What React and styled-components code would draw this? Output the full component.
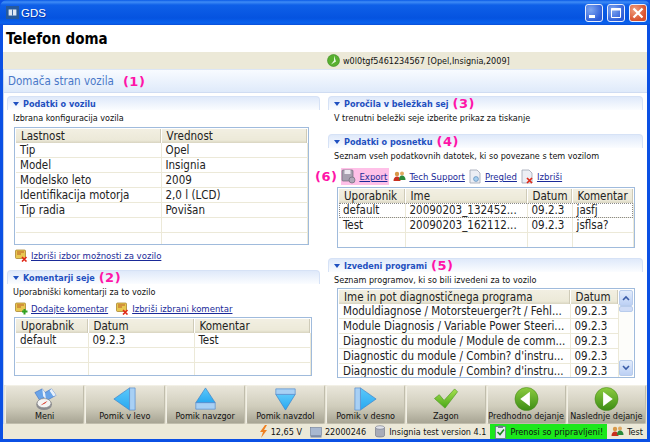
import React from "react";
import styled, { createGlobalStyle } from "styled-components";

const GlobalStyle = createGlobalStyle`
  html, body { margin: 0; padding: 0; background: #0a4de0; overflow: hidden; }
  body { font-family: "DejaVu Sans Condensed", "DejaVu Sans", sans-serif; }
`;

const Win = styled.div`
  width: 650px;
  height: 442px;
  display: flex;
  flex-direction: column;
  overflow: hidden;
  background: #0b50e4;
`;

const TitleBar = styled.div`
  height: 25px;
  flex: none;
  display: flex;
  align-items: center;
  padding: 0 3px 0 6px;
  gap: 2px;
  border-radius: 7px 7px 0 0;
  background: linear-gradient(#0a5ae6 0, #3f8cf6 2px, #0f60e8 5px, #0553e0 18px, #0a62ee 23px, #0a4ed8 25px);
  color: #fff;
  font: 11.5px "Liberation Sans", Arial, sans-serif;
`;

const TitleText = styled.span`
  flex: 1;
  text-shadow: 1px 1px 0 #0a3aa8;
`;

const WinBtn = styled.div`
  width: 18px;
  height: 18px;
  box-sizing: border-box;
  border: 1px solid #e8eefc;
  border-radius: 3px;
  margin-left: 2px;
  display: flex;
  align-items: center;
  justify-content: center;
  background: ${p => (p.$close ? "radial-gradient(circle at 30% 30%, #f0a080, #d8502c 70%)" : "radial-gradient(circle at 30% 30%, #7ea6f0, #2c5cd8 75%)")};
`;

const Client = styled.div`
  flex: 1;
  margin: 0 3px 3px;
  display: flex;
  flex-direction: column;
  background: #fff;
  min-height: 0;
`;

const Heading = styled.h1`
  margin: 0;
  height: 27px;
  flex: none;
  padding-left: 3px;
  font-size: 15px;
  font-weight: bold;
  line-height: 29px;
  color: #000;
`;

const VinBar = styled.div`
  height: 17px;
  flex: none;
  background: #ece9d8;
  display: flex;
  align-items: center;
  gap: 3px;
  font-size: 9px;
  color: #111;
  padding-left: 324px;
`;

const Page = styled.div`
  flex: 1;
  min-height: 0;
  display: flex;
  flex-direction: column;
  border-left: 1px solid #c4d4ee;
`;

const PageTitle = styled.div`
  height: 24px;
  flex: none;
  box-sizing: border-box;
  padding-left: 4px;
  border-top: 1px solid #dce6f6;
  border-bottom: 1px solid #cfdcf2;
  background: linear-gradient(#f8fbff, #dfeafa);
  color: #4a78c8;
  font-size: 11.5px;
  line-height: 23px;
  display: flex;
  gap: 9px;
`;

const Tag = styled.span`
  color: #ff14a8;
  font-family: "DejaVu Sans", sans-serif;
  font-weight: bold;
  font-size: ${p => p.$size || 13}px;
  letter-spacing: 0.5px;
`;

const Columns = styled.div`
  flex: 1;
  min-height: 0;
  display: grid;
  grid-template-columns: 313px 315px;
  column-gap: 8px;
  padding: 3px 0 0 3px;
`;

const Column = styled.div`
  display: flex;
  flex-direction: column;
`;

const SectionHead = styled.div`
  height: 14px;
  box-sizing: border-box;
  flex: none;
  display: flex;
  align-items: center;
  gap: 4px;
  padding-left: 5px;
  border: 1px solid #d6e2f6;
  border-bottom: none;
  border-radius: 4px 4px 0 0;
  background: linear-gradient(#dfe9fa, #fbfdff);
  color: #1f50c0;
  font-size: 9px;
  font-weight: bold;
  margin-top: ${p => p.$top || 0}px;
`;

const Caret = styled.i`
  width: 0;
  height: 0;
  border: 3.5px solid transparent;
  border-top: 4px solid #1f50c0;
  border-bottom: none;
`;

const Sub = styled.div`
  font-size: 9px;
  line-height: 13px;
  margin: 2px 0 0 6px;
  color: #111;
`;

const Actions = styled.div`
  display: flex;
  align-items: center;
  gap: ${p => p.$gap || 6}px;
  height: ${p => p.$h || 14}px;
  margin: ${p => p.$m || "0"};
`;

const Action = styled.a`
  display: inline-flex;
  align-items: center;
  gap: 3px;
  color: #1a2a98;
  text-decoration: underline;
  font-size: 9.5px;
  background: ${p => (p.$hot ? "#ffc0e8" : "transparent")};
  padding: ${p => (p.$hot ? "0 2px 0 0" : "0")};
  height: ${p => (p.$hot ? "17px" : "auto")};
`;

const TableBox = styled.div`
  box-sizing: border-box;
  width: ${p => p.$w}px;
  height: ${p => p.$h}px;
  margin-left: ${p => p.$left}px;
  margin-top: ${p => p.$top || 0}px;
  border: 1px solid #a0bbdc;
  padding: 1px 1px;
  background: #fff;
  overflow: hidden;
  display: flex;
`;

const Grid = styled.table`
  border-collapse: collapse;
  table-layout: fixed;
  width: ${p => p.$w}px;
  font-size: 11.5px;
  color: #222;
  flex: none;
`;

const Th = styled.th`
  height: 14px;
  padding: 0 0 0 5px;
  background: linear-gradient(#f2efe2, #ece9d8 80%, #d8d4c0);
  font-weight: normal;
  text-align: left;
  white-space: nowrap;
  overflow: hidden;
  line-height: 14px;
  border-right: 1px solid #fff;
  box-shadow: inset -1px 0 0 #cfcbb8;
`;

const Td = styled.td`
  height: 14px;
  padding: 0 0 0 4px;
  line-height: 14px;
  white-space: nowrap;
  overflow: hidden;
  border-bottom: 1px solid #ece9d8;
  border-right: 1px solid #ece9d8;
`;

const SelectedRow = styled.tr`
  outline: 1px dotted #8a8a8a;
  outline-offset: -1px;
`;

const ScrollBar = styled.div`
  flex: 1;
  display: flex;
  flex-direction: column;
  justify-content: space-between;
  background: #fdfdfa;
`;

const ScrollBtn = styled.div`
  height: 16px;
  border: 1px solid #b8ccec;
  border-radius: 2px;
  box-sizing: border-box;
  background: linear-gradient(#e2ecfc, #bcd0f4);
  display: flex;
  align-items: center;
  justify-content: center;
`;

const ScrollThumb = styled(ScrollBtn)`
  height: 6px;
  margin-bottom: auto;
  background: #cfdcf6;
`;

const Toolbar = styled.div`
  height: 39px;
  flex: none;
  margin-top: 8px;
  display: grid;
  grid-template-columns: repeat(8, 1fr);
  gap: 1px;
  padding: 0 1px;
  background: #e8e5d6;
`;

const NavBtn = styled.button`
  all: unset;
  box-sizing: border-box;
  display: flex;
  flex-direction: column;
  align-items: center;
  justify-content: space-between;
  padding: 1px 0 2px;
  border: 1px solid #c0bdac;
  border-top-color: #f2f0e6;
  border-left-color: #f2f0e6;
  border-radius: 2px;
  background: linear-gradient(#e9e6da, #d0cdbc 55%, #a8a594);
  font-size: 9px;
  color: #111;
  white-space: nowrap;
  overflow: hidden;
`;

const StatusBar = styled.div`
  height: 15px;
  flex: none;
  display: flex;
  justify-content: flex-end;
  align-items: stretch;
  background: #ece9d8;
  font-size: 9px;
  color: #111;
`;

const StatusItem = styled.div`
  display: flex;
  align-items: center;
  gap: 3px;
  padding: 0 4px;
  background: ${p => (p.$ok ? "#1ce81c" : "transparent")};
`;

/* drawings */
const Gen = ({ id, a, b }) => (
  <linearGradient id={id} x1="0" y1="0" x2="0" y2="1">
    <stop offset="0" stopColor={a} />
    <stop offset="1" stopColor={b} />
  </linearGradient>
);

const ArrowIcon = ({ dir }) => {
  const id = "ar" + dir;
  const shapes = {
    left: { tri: "2,13 19,1 19,25", band: "M19 1h6v24h-6z" },
    right: { tri: "25,13 8,1 8,25", band: "M2 1h6v24H2z" },
    up: { tri: "13.5,1 3,17 24,17", band: "M3 17h21v7H3z" },
    down: { tri: "13.5,25 3,8 24,8", band: "M3 2h21v6H3z" },
  }[dir];
  return (
    <svg width="27" height="26" viewBox="0 0 27 26">
      <defs><Gen id={id} a="#5cc8fa" b="#28a8f0" /></defs>
      <polygon points={shapes.tri} fill={`url(#${id})`} stroke="#3a80c8" strokeWidth="0.7" />
      <path d={shapes.band} fill="#a8d0f4" stroke="#5088cc" strokeWidth="0.7" />
    </svg>
  );
};

const MenuIcon = () => (
  <svg width="28" height="26" viewBox="0 0 28 26">
    <path d="M3 6l8-4 3 4 7-4 5 7-9 5-3-3-6 3z" fill="#6aa4e8" stroke="#3c6cc0" strokeWidth="0.6" />
    <path d="M11 2l3 4 1 7-3-3zM21 2l5 7-3 1-4-6z" fill="#e8f0fa" />
    <ellipse cx="13" cy="19" rx="8.5" ry="6" fill="#8c8c90" />
    <ellipse cx="13" cy="17.5" rx="7.5" ry="5" fill="#f4f4f4" stroke="#777" strokeWidth="0.6" />
    <path d="M9 20l4-3 4-2-3 3z" fill="#d83020" />
  </svg>
);

const CheckIcon = () => (
  <svg width="26" height="25" viewBox="0 0 26 25">
    <defs><Gen id="chk" a="#a8e050" b="#48a818" /></defs>
    <path d="M1 12l5-4 5 6L22 2l3 3-13 17z" fill="url(#chk)" stroke="#4c9a20" strokeWidth="0.7" />
  </svg>
);

const RoundIcon = ({ back }) => {
  const id = back ? "rb" : "rf";
  return (
    <svg width="25" height="25" viewBox="0 0 25 25">
      <defs><Gen id={id} a="#8ccc40" b="#3c8c14" /></defs>
      <circle cx="12.5" cy="12.5" r="12" fill={`url(#${id})`} stroke="#4a8a20" strokeWidth="0.6" />
      <polygon points={back ? "6,12.5 16,5 16,20" : "19,12.5 9,5 9,20"} fill="#fff" />
    </svg>
  );
};

const GreenDot = () => (
  <svg width="13" height="13" viewBox="0 0 13 13">
    <circle cx="6.5" cy="6.5" r="6" fill="#58b030" stroke="#3a8a20" strokeWidth="0.6" />
    <path d="M7 1.5v5l-3 4 5-3" fill="#e8f8e0" />
  </svg>
);

const DocBadge = ({ add }) => (
  <svg width="13" height="13" viewBox="0 0 13 13">
    <rect x="0.5" y="1" width="10" height="8.5" rx="1" fill="#e8c850" stroke="#a07820" strokeWidth="0.7" />
    <path d="M2 3h7M2 5h4" stroke="#b85020" strokeWidth="0.9" />
    {add ? (
      <path d="M9.5 7v5.5M7 9.5h5.5" stroke="#30a020" strokeWidth="2" />
    ) : (
      <path d="M7 8l4.5 4.5M11.5 8L7 12.5" stroke="#e02818" strokeWidth="1.6" />
    )}
  </svg>
);

const SaveIcon = () => (
  <svg width="15" height="15" viewBox="0 0 15 15">
    <rect x="1" y="1" width="11" height="11" rx="1" fill="#a8a0b0" stroke="#706878" strokeWidth="0.7" />
    <rect x="3.5" y="1" width="6" height="4" fill="#ece8f0" />
    <circle cx="11" cy="11" r="3" fill="#b0a8b8" stroke="#706878" strokeWidth="0.7" />
  </svg>
);

const PeopleIcon = () => (
  <svg width="13" height="13" viewBox="0 0 13 13">
    <circle cx="4" cy="4" r="2.2" fill="#d89848" />
    <path d="M0.5 11c0-3 1.5-4.5 3.5-4.5S7.5 8 7.5 11z" fill="#c83020" />
    <circle cx="9" cy="3.5" r="2" fill="#e0a860" />
    <path d="M6 10c0-3 1-4.5 3-4.5s3.5 1.5 3.5 4.5z" fill="#2a8a3a" />
  </svg>
);

const PageIcon = ({ del }) => (
  <svg width="13" height="15" viewBox="0 0 13 15">
    <path d="M1 1h7l3 3v10H1z" fill="#eceef4" stroke="#a0a4b4" strokeWidth="0.8" />
    {del ? (
      <path d="M6 9l5 5M11 9l-5 5" stroke="#e02818" strokeWidth="1.7" />
    ) : (
      <circle cx="7" cy="10" r="2.4" fill="#a8d0f0" stroke="#5888b8" strokeWidth="0.7" />
    )}
  </svg>
);

const Bolt = () => (
  <svg width="9" height="13" viewBox="0 0 9 13">
    <path d="M6 0L1 7h3l-2 6 6-8H5l3-5z" fill="#f08020" />
  </svg>
);

const DiskIcon = () => (
  <svg width="12" height="12" viewBox="0 0 12 12">
    <rect x="0.5" y="1.5" width="11" height="8" fill="#a8b8d0" stroke="#6c7c98" strokeWidth="0.6" />
    <rect x="0.5" y="9.5" width="11" height="2" fill="#7c8ca8" />
  </svg>
);

const DbIcon = () => (
  <svg width="12" height="13" viewBox="0 0 12 13">
    <path d="M1.5 2.5v8c0 2 9 2 9 0v-8z" fill="#a8acb8" stroke="#6c7080" strokeWidth="0.6" />
    <ellipse cx="6" cy="2.5" rx="4.5" ry="1.8" fill="#dfe2ea" stroke="#6c7080" strokeWidth="0.6" />
  </svg>
);

const ClipIcon = () => (
  <svg width="13" height="14" viewBox="0 0 13 14">
    <rect x="1.5" y="1.5" width="10" height="12" fill="#e8ecf0" stroke="#607080" strokeWidth="0.7" />
    <rect x="4" y="0.5" width="5" height="2.5" fill="#707c88" />
    <path d="M3.5 7l2.5 2.5L10 4.5" stroke="#18881c" strokeWidth="1.6" fill="none" />
  </svg>
);

const DataTable = ({ cols, heads, rows, blank = 0, width, selected = -1 }) => (
  <Grid $w={width}>
    <colgroup>{cols.map((c, i) => <col key={i} width={c} />)}</colgroup>
    <thead><tr>{heads.map(h => <Th key={h}>{h}</Th>)}</tr></thead>
    <tbody>
      {rows.map((r, i) => {
        const RowTag = i === selected ? SelectedRow : "tr";
        return <RowTag key={i}>{r.map((c, j) => <Td key={j}>{c}</Td>)}</RowTag>;
      })}
      {Array.from({ length: blank }).map((_, i) => (
        <tr key={"b" + i}>{heads.map(h => <Td key={h}>{"\u00a0"}</Td>)}</tr>
      ))}
    </tbody>
  </Grid>
);

const buttons = [
  { label: "Meni", icon: <MenuIcon /> },
  { label: "Pomik v levo", icon: <ArrowIcon dir="left" /> },
  { label: "Pomik navzgor", icon: <ArrowIcon dir="up" /> },
  { label: "Pomik navzdol", icon: <ArrowIcon dir="down" /> },
  { label: "Pomik v desno", icon: <ArrowIcon dir="right" /> },
  { label: "Zagon", icon: <CheckIcon /> },
  { label: "Predhodno dejanje", icon: <RoundIcon back /> },
  { label: "Naslednje dejanje", icon: <RoundIcon /> },
];

const App = () => (
  <Win>
    <GlobalStyle />
    <TitleBar>
      <svg width="13" height="15" viewBox="0 0 15 15">
        <rect width="15" height="15" fill="#26599c" />
        <rect x="3" y="4" width="9" height="7" fill="#dfe8f4" />
        <path d="M7.5 4v7" stroke="#26599c" />
      </svg>
      <TitleText>GDS</TitleText>
      <WinBtn>
        <svg width="12" height="12" viewBox="0 0 12 12"><rect x="1" y="8" width="6" height="3" fill="#fff" /></svg>
      </WinBtn>
      <WinBtn>
        <svg width="12" height="12" viewBox="0 0 12 12"><path d="M1.5 1.5h9v9h-9z" fill="none" stroke="#fff" /><path d="M1 2.5h10" stroke="#fff" strokeWidth="2" /></svg>
      </WinBtn>
      <WinBtn $close>
        <svg width="12" height="12" viewBox="0 0 12 12"><path d="M1.5 1.5l9 9M10.5 1.5l-9 9" stroke="#fff" strokeWidth="2.2" /></svg>
      </WinBtn>
    </TitleBar>
    <Client>
      <Heading>Telefon doma</Heading>
      <VinBar>
        <GreenDot />
        w0l0tgf5461234567 [Opel,Insignia,2009]
      </VinBar>
      <Page>
        <PageTitle>
          Domača stran vozila
          <Tag>(1)</Tag>
        </PageTitle>
        <Columns>
          <Column>
            <SectionHead><Caret />Podatki o vozilu</SectionHead>
            <Sub>Izbrana konfiguracija vozila</Sub>
            <TableBox $w={295} $h={118} $left={7} $top={2}>
              <DataTable
                width={291}
                cols={[145, 146]}
                heads={["Lastnost", "Vrednost"]}
                rows={[
                  ["Tip", "Opel"],
                  ["Model", "Insignia"],
                  ["Modelsko leto", "2009"],
                  ["Identifikacija motorja", "2,0 l (LCD)"],
                  ["Tip radia", "Povišan"],
                ]}
                blank={2}
              />
            </TableBox>
            <Actions $m="3px 0 0 8px">
              <Action><DocBadge />Izbriši izbor možnosti za vozilo</Action>
            </Actions>
            <SectionHead $top={8}><Caret />Komentarji seje <Tag>(2)</Tag></SectionHead>
            <Sub>Uporabniški komentarji za to vozilo</Sub>
            <Actions $m="2px 0 0 8px" $gap={8}>
              <Action><DocBadge add />Dodajte komentar</Action>
              <Action><DocBadge />Izbriši izbrani komentar</Action>
            </Actions>
            <TableBox $w={298} $h={59} $left={7} $top={2}>
              <DataTable
                width={294}
                cols={[72, 106, 116]}
                heads={["Uporabnik", "Datum", "Komentar"]}
                rows={[["default", "09.2.3", "Test"]]}
                blank={2}
              />
            </TableBox>
          </Column>
          <Column>
            <SectionHead><Caret />Poročila v beležkah sej <Tag>(3)</Tag></SectionHead>
            <Sub>V trenutni beležki seje izberite prikaz za tiskanje</Sub>
            <SectionHead $top={9}><Caret />Podatki o posnetku <Tag>(4)</Tag></SectionHead>
            <Sub>Seznam vseh podatkovnih datotek, ki so povezane s tem vozilom</Sub>
            <Actions $m="5px 0 0 -13px" $gap={4} $h={17}>
              <Tag>(6)</Tag>
              <Action $hot><SaveIcon />Export</Action>
              <Action><PeopleIcon />Tech Support</Action>
              <Action><PageIcon />Pregled</Action>
              <Action><PageIcon del />Izbriši</Action>
            </Actions>
            <TableBox $w={298} $h={61} $left={9} $top={2}>
              <DataTable
                width={294}
                cols={[66, 122, 45, 61]}
                heads={["Uporabnik", "Ime", "Datum", "Komentar"]}
                selected={0}
                rows={[
                  ["default", "20090203_132452...", "09.2.3", "jasfj"],
                  ["Test", "20090203_162112...", "09.2.3", "jsflsa?"],
                ]}
                blank={1}
              />
            </TableBox>
            <SectionHead $top={10}><Caret />Izvedeni programi <Tag>(5)</Tag></SectionHead>
            <Sub>Seznam programov, ki so bili izvedeni za to vozilo</Sub>
            <TableBox $w={298} $h={90} $left={9} $top={1}>
              <DataTable
                width={279}
                cols={[231, 48]}
                heads={["Ime in pot diagnostičnega programa", "Datum"]}
                rows={[
                  ["Moduldiagnose / Motorsteuerger?t / Fehl...", "09.2.3"],
                  ["Module Diagnosis / Variable Power Steeri...", "09.2.3"],
                  ["Diagnostic du module / Module de comm...", "09.2.3"],
                  ["Diagnostic du module / Combin? d'instru...", "09.2.3"],
                  ["Diagnostic du module / Combin? d'instru...", "09.2.3"],
                ]}
              />
              <ScrollBar>
                <ScrollBtn>
                  <svg width="8" height="6" viewBox="0 0 8 6"><path d="M1 5l3-3 3 3" fill="none" stroke="#3a5ca8" strokeWidth="1.6" /></svg>
                </ScrollBtn>
                <ScrollThumb />
                <ScrollBtn>
                  <svg width="8" height="6" viewBox="0 0 8 6"><path d="M1 1l3 3 3-3" fill="none" stroke="#3a5ca8" strokeWidth="1.6" /></svg>
                </ScrollBtn>
              </ScrollBar>
            </TableBox>
          </Column>
        </Columns>
        <Toolbar>
          {buttons.map(b => (
            <NavBtn key={b.label}>
              {b.icon}
              <span>{b.label}</span>
            </NavBtn>
          ))}
        </Toolbar>
      </Page>
      <StatusBar>
        <StatusItem><Bolt />12,65 V</StatusItem>
        <StatusItem><DiskIcon />22000246</StatusItem>
        <StatusItem><DbIcon />Insignia test version 4.1</StatusItem>
        <StatusItem $ok><ClipIcon />Prenosi so pripravljeni!</StatusItem>
        <StatusItem><PeopleIcon />Test</StatusItem>
      </StatusBar>
    </Client>
  </Win>
);

export default App;
